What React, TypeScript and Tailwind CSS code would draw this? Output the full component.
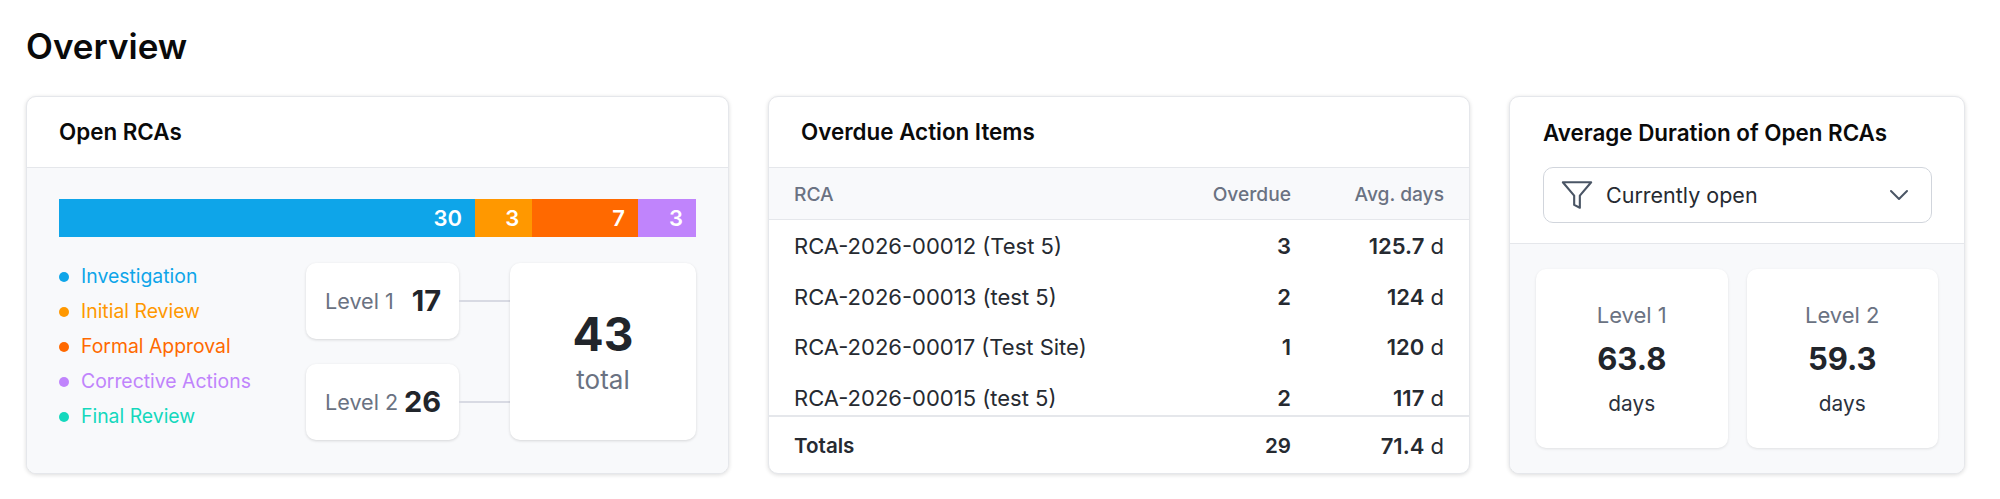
import React from "react";

const legend = [
  { label: "Investigation", dot: "bg-[#0ea5e9]", text: "text-[#0ea5e9]" },
  { label: "Initial Review", dot: "bg-[#ff9800]", text: "text-[#ff9800]" },
  { label: "Formal Approval", dot: "bg-[#ff6900]", text: "text-[#ff6900]" },
  { label: "Corrective Actions", dot: "bg-[#c084fc]", text: "text-[#c084fc]" },
  { label: "Final Review", dot: "bg-[#14d8bd]", text: "text-[#14d8bd]" },
];

const rows = [
  ["RCA-2026-00012 (Test 5)", "3", "125.7"],
  ["RCA-2026-00013 (test 5)", "2", "124"],
  ["RCA-2026-00017 (Test Site)", "1", "120"],
  ["RCA-2026-00015 (test 5)", "2", "117"],
];

function LevelPill({ name, value }: { name: string; value: string }) {
  return (
    <div className="flex items-center">
      <div className="flex h-[76px] w-[153px] items-center justify-between rounded-[10px] bg-white pl-[19px] pr-[18px] shadow-[0_1px_3px_rgba(0,0,0,0.14)]">
        <span className="text-[21.6px] text-[#6a7282]">{name}</span>
        <span className="text-[29px] font-bold text-[#21252b]">{value}</span>
      </div>
      <div className="h-[2px] w-[51px] bg-[#d8dae3]" />
    </div>
  );
}

function DurationBox({ name, value }: { name: string; value: string }) {
  return (
    <div className="flex h-[179px] flex-1 flex-col items-center rounded-[10px] bg-white pt-[30px] shadow-[0_1px_3px_rgba(0,0,0,0.1)]">
      <span className="text-[22px] leading-[32px] text-[#6a7282]">{name}</span>
      <span className="mt-[12px] text-[31px] font-bold leading-[32px] text-[#21252b]">{value}</span>
      <span className="mt-[13px] text-[20.8px] leading-[32px] text-[#2b313c]">days</span>
    </div>
  );
}

export default function App() {
  return (
    <div className="h-[499px] overflow-hidden bg-white pl-[26px] font-['Inter',sans-serif] [font-optical-sizing:none] [font-variation-settings:'opsz'_14]">
      <h1 className="pt-[25px] text-[35px] font-semibold leading-[42px] text-[#0a0a0a]">Overview</h1>
      <div className="mt-[29px] flex gap-[39px]">
        <section className="flex h-[378px] w-[703px] flex-col overflow-hidden rounded-[10px] border border-[#e5e7eb] bg-white shadow-[0_1px_4px_rgba(0,0,0,0.14)]">
          <header className="flex h-[71px] shrink-0 items-center border-b border-[#e5e7eb] pl-[32px]">
            <h2 className="text-[22.4px] font-semibold text-[#0a0a0a]">Open RCAs</h2>
          </header>
          <div className="flex flex-1 flex-col bg-[#f8f9fb] pl-[32px] pr-[32px] pt-[31px]">
            <div className="flex h-[38px] text-[22px] font-semibold leading-[38px] text-white">
              <div className="w-[65.3%] bg-[#0ea5e9] pr-[13px] text-right">30</div>
              <div className="w-[9%] bg-[#ff9800] pr-[13px] text-right">3</div>
              <div className="w-[16.6%] bg-[#ff6900] pr-[13px] text-right">7</div>
              <div className="w-[9.1%] bg-[#c084fc] pr-[13px] text-right">3</div>
            </div>
            <div className="mt-[22px] flex justify-between">
              <ul className="flex flex-col">
                {legend.map((l) => (
                  <li key={l.label} className="flex h-[35px] items-center gap-[12px]">
                    <span className={`h-[10px] w-[10px] rounded-full ${l.dot}`} />
                    <span className={`text-[19.4px] ${l.text}`}>{l.label}</span>
                  </li>
                ))}
              </ul>
              <div className="mt-[4px] flex">
                <div className="flex flex-col gap-[25px]">
                  <LevelPill name="Level 1" value="17" />
                  <LevelPill name="Level 2" value="26" />
                </div>
                <div className="flex h-[177px] w-[186px] flex-col items-center justify-center rounded-[10px] bg-white shadow-[0_1px_3px_rgba(0,0,0,0.14)]">
                  <span className="text-[46px] font-bold leading-[56px] text-[#21252b]">43</span>
                  <span className="text-[26px] leading-[36px] text-[#6a7282]">total</span>
                </div>
              </div>
            </div>
          </div>
        </section>

        <section className="flex h-[378px] w-[702px] flex-col overflow-hidden rounded-[10px] border border-[#e5e7eb] bg-white shadow-[0_1px_4px_rgba(0,0,0,0.14)]">
          <header className="flex h-[71px] shrink-0 items-center border-b border-[#e5e7eb] pl-[32px]">
            <h2 className="text-[22.4px] font-semibold text-[#0a0a0a]">Overdue Action Items</h2>
          </header>
          <div className="grid h-[52px] shrink-0 grid-cols-[1fr_130px_153px] items-center border-b border-[#e5e7eb] bg-[#f8f9fb] px-[25px] pt-[1px] text-[19.2px] font-medium text-[#6a7282]">
            <span>RCA</span>
            <span className="text-right">Overdue</span>
            <span className="text-right">Avg. days</span>
          </div>
          <div className="min-h-0 flex-1 overflow-hidden pt-[1px]">
            {rows.map((r) => (
              <div key={r[0]} className="grid h-[50.7px] grid-cols-[1fr_130px_153px] items-center px-[25px] text-[22px] text-[#262a31]">
                <span>{r[0]}</span>
                <span className="text-right font-semibold">{r[1]}</span>
                <span className="text-right"><b className="font-semibold">{r[2]}</b> d</span>
              </div>
            ))}
          </div>
          <div className="grid h-[58px] shrink-0 grid-cols-[1fr_130px_153px] items-center border-t-2 border-[#e5e7eb] px-[25px] pt-[3px] text-[22px] text-[#262a31]">
            <span className="text-[20.6px] font-semibold">Totals</span>
            <span className="text-right text-[20.6px] font-semibold">29</span>
            <span className="text-right"><b className="font-semibold">71.4</b> d</span>
          </div>
        </section>

        <section className="flex h-[378px] w-[456px] flex-col overflow-hidden rounded-[10px] border border-[#e5e7eb] bg-white shadow-[0_1px_4px_rgba(0,0,0,0.14)]">
          <header className="h-[147px] shrink-0 border-b border-[#e5e7eb] pl-[33px] pr-[32px] pt-[21px]">
            <h2 className="text-[22.4px] font-semibold leading-[30px] text-[#0a0a0a]">Average Duration of Open RCAs</h2>
            <div className="mt-[19px] flex h-[56px] w-[389px] items-center rounded-[10px] border border-[#d1d5dc] pl-[16px] pr-[22px]">
              <svg viewBox="0 0 24 24" className="h-[34px] w-[34px] text-[#4a5565]" fill="none" stroke="currentColor" strokeWidth="1.5" strokeLinejoin="round">
                <polygon points="22 3 2 3 10 12.46 10 19 14 21 14 12.46 22 3" />
              </svg>
              <span className="ml-[12px] flex-1 text-[21.5px] text-[#262a31]">Currently open</span>
              <svg viewBox="0 0 20 12" className="h-[12px] w-[20px] text-[#4a5565]" fill="none" stroke="currentColor" strokeWidth="2" strokeLinecap="round" strokeLinejoin="round">
                <path d="M2 2l8 8 8-8" />
              </svg>
            </div>
          </header>
          <div className="flex flex-1 gap-[19px] bg-[#f8f9fb] pl-[26px] pr-[26px] pt-[25px]">
            <DurationBox name="Level 1" value="63.8" />
            <DurationBox name="Level 2" value="59.3" />
          </div>
        </section>
      </div>
    </div>
  );
}
